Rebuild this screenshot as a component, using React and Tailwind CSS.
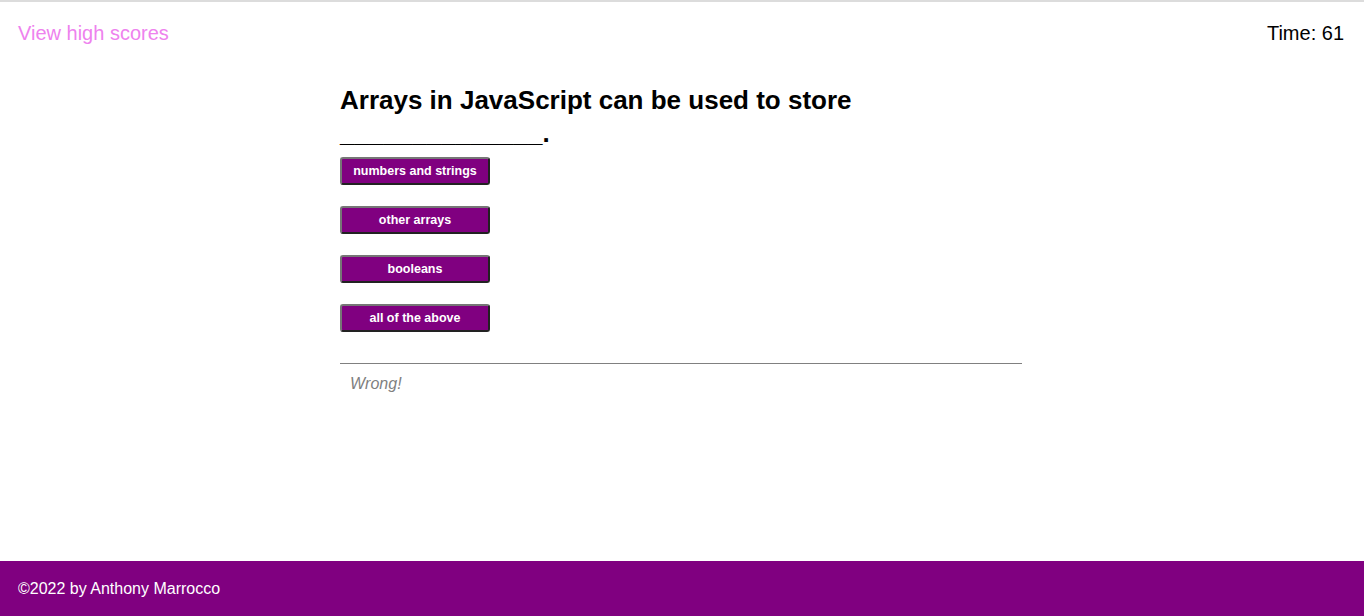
import React from "react";

const choices = ["numbers and strings", "other arrays", "booleans", "all of the above"];

export default function App() {
  return (
    <div className="min-h-screen flex flex-col bg-white font-['Liberation_Sans',Arial,sans-serif]">
      <div className="border-t-2 border-[#dcdcdc]"></div>
      <header className="flex justify-between items-center px-[18px] h-[62px]">
        <a href="#" className="text-[20px] text-[#ee82ee]">
          View high scores
        </a>
        <div className="text-[20px] text-black pr-[2px]">Time: 61</div>
      </header>

      <main className="w-[682px] ml-[340px]">
        <h2 className="text-[26px] font-bold leading-[33px] text-black mt-[20px] mb-[7px]">
          Arrays in JavaScript can be used to store ______________.
        </h2>
        <div className="flex flex-col gap-[21px]">
          {choices.map((c) => (
            <button
              key={c}
              className="w-[150px] h-[28px] bg-[#800080] text-white text-[12.5px] font-bold rounded-[3px] border-2 border-t-[#767676] border-l-[#767676] border-r-[#222] border-b-[#222]"
            >
              {c}
            </button>
          ))}
        </div>
        <div className="mt-[31px] border-t border-[#808080] pt-[8px] pl-[10px]">
          <p className="italic text-[16px] text-[#808080]">Wrong!</p>
        </div>
      </main>

      <footer className="mt-auto h-[55px] bg-[#800080] flex items-center px-[18px]">
        <p className="text-white text-[16px]">©2022 by Anthony Marrocco</p>
      </footer>
    </div>
  );
}
